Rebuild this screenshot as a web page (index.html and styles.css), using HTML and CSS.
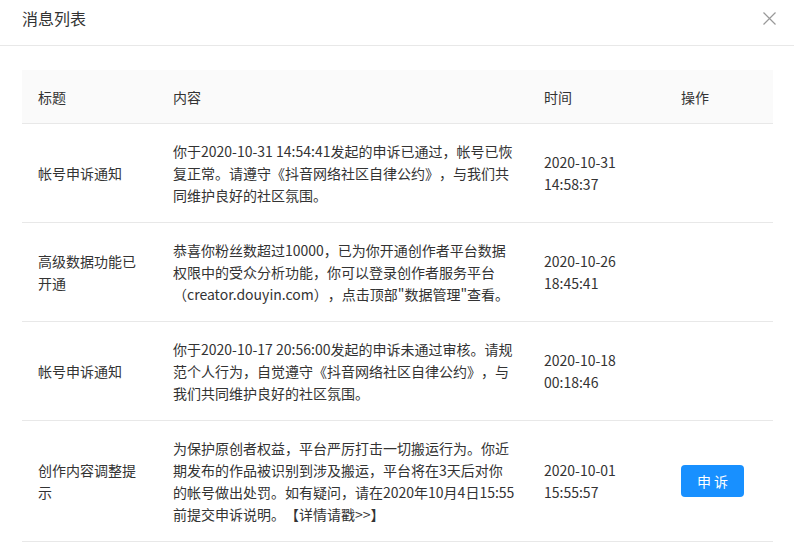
FILE: index.html
```html
<!DOCTYPE html>
<html lang="zh-CN">
<head>
<meta charset="utf-8">
<title>消息列表</title>
<link rel="stylesheet" href="styles.css">
</head>
<body>
<div class="modal">
  <div class="modal-header">
    <span class="modal-title">消息列表</span>
    <span class="close" aria-label="关闭">
      <svg width="13" height="13" viewBox="0 0 13 13"><path d="M0.5 0.5 L12.5 12.5 M12.5 0.5 L0.5 12.5" stroke="#999" stroke-width="1.2" fill="none"/></svg>
    </span>
  </div>
  <div class="modal-body">
    <table class="msg-table">
      <colgroup>
        <col class="c-title"><col class="c-content"><col class="c-time"><col class="c-op">
      </colgroup>
      <thead>
        <tr><th>标题</th><th>内容</th><th>时间</th><th>操作</th></tr>
      </thead>
      <tbody>
        <tr>
          <td>帐号申诉通知</td>
          <td class="content">你于2020-10-31 14:54:41发起的申诉已通过，帐号已恢复正常。请遵守《抖音网络社区自律公约》，与我们共同维护良好的社区氛围。</td>
          <td class="time">2020-10-31 14:58:37</td>
          <td></td>
        </tr>
        <tr>
          <td>高级数据功能已开通</td>
          <td class="content">恭喜你粉丝数超过10000，已为你开通创作者平台数据权限中的受众分析功能，你可以登录创作者服务平台（creator.douyin.com），点击顶部"数据管理"查看。</td>
          <td class="time">2020-10-26 18:45:41</td>
          <td></td>
        </tr>
        <tr>
          <td>帐号申诉通知</td>
          <td class="content">你于2020-10-17 20:56:00发起的申诉未通过审核。请规范个人行为，自觉遵守《抖音网络社区自律公约》，与我们共同维护良好的社区氛围。</td>
          <td class="time">2020-10-18 00:18:46</td>
          <td></td>
        </tr>
        <tr>
          <td>创作内容调整提示</td>
          <td class="content">为保护原创者权益，平台严厉打击一切搬运行为。你近期发布的作品被识别到涉及搬运，平台将在3天后对你的帐号做出处罚。如有疑问，请在2020年10月4日15:55前提交申诉说明。【详情请戳&gt;&gt;】</td>
          <td class="time">2020-10-01 15:55:57</td>
          <td><button class="btn-primary" type="button">申 诉</button></td>
        </tr>
      </tbody>
    </table>
  </div>
</div>
</body>
</html>
```
FILE: styles.css
```css
html, body {
  margin: 0;
  padding: 0;
  background: #fff;
}
body {
  font-family: "Noto Sans CJK SC", "Noto Sans", sans-serif;
  color: #333;
  text-spacing-trim: space-all;
}
.modal-header {
  display: flex;
  justify-content: space-between;
  align-items: center;
  padding: 6px 18px 15px 22px;
  border-bottom: 1px solid #e8e8e8;
}
.modal-title {
  font-size: 16px;
  line-height: 24px;
  color: #333;
}
.close {
  display: flex;
  width: 13px;
  height: 13px;
}
.modal-body {
  padding: 24px 21px 0 22px;
}
.msg-table {
  width: 751px;
  table-layout: fixed;
  border-collapse: collapse;
  font-size: 14px;
  line-height: 22px;
}
.c-title { width: 135px; }
.c-content { width: 371px; }
.c-time { width: 137px; }
.c-op { width: 108px; }
.msg-table th {
  background: #fafafa;
  font-weight: normal;
  text-align: left;
  padding: 16px 16px 15px;
  border-bottom: 1px solid #e8e8e8;
  color: #333;
}
.msg-table td {
  padding: 16px;
  vertical-align: middle;
  border-bottom: 1px solid #e8e8e8;
  color: #333;
  word-break: normal;
}
.msg-table td.content {
  padding-right: 13px;
}
.btn-primary {
  width: 63px;
  height: 32px;
  border: none;
  border-radius: 4px;
  background: #1890ff;
  color: #fff;
  font-family: inherit;
  font-size: 14px;
  padding: 0;
  display: block;
}
```
